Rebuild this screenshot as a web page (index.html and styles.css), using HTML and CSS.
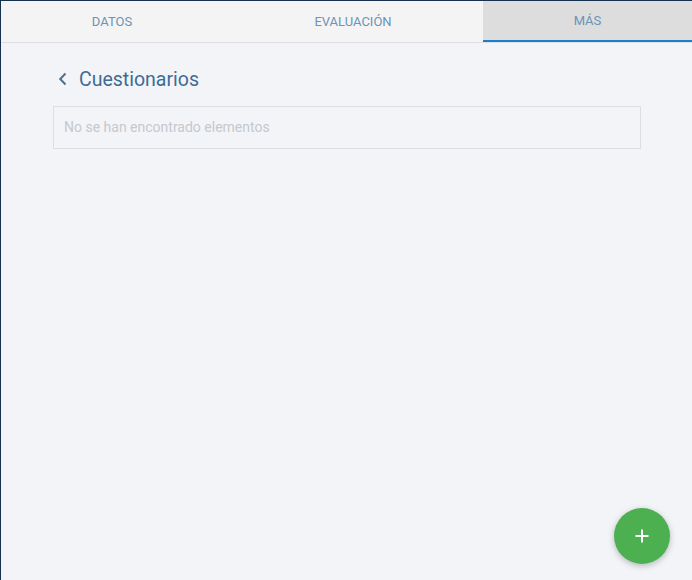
FILE: index.html
```html
<!DOCTYPE html>
<html lang="es">

<head>
    <meta charset="UTF-8">
    <meta name="viewport" content="width=device-width, initial-scale=1.0">
    <title>Cuestionarios</title>
    <link rel="stylesheet" href="styles.css">
</head>

<body>

    <nav class="tabs">
        <a class="tab tab-datos">DATOS</a>
        <a class="tab tab-evaluacion">EVALUACIÓN</a>
        <a class="tab tab-mas">MÁS</a>
    </nav>

    <main class="content">
        <div class="heading">
            <svg class="back" width="10" height="14" viewBox="0 0 10 14">
                <path d="M7.5 1.5 L2.2 7 L7.5 12.5" fill="none" stroke="#54708a" stroke-width="2" />
            </svg>
            <h1>Cuestionarios</h1>
        </div>
        <div class="empty">No se han encontrado elementos</div>
    </main>

    <button class="fab" type="button">
        <svg width="16" height="16" viewBox="0 0 16 16">
            <path d="M8 1.5 V14.5 M1.5 8 H14.5" fill="none" stroke="#fff" stroke-width="2" />
        </svg>
    </button>

</body>

</html>
```

FILE: styles.css
```css
html,
body {
    height: 100%;
}

body {
    margin: 0;
    box-sizing: border-box;
    height: 580px;
    overflow: hidden;
    position: relative;
    background-color: #f2f4f8;
    border-top: 1px solid #14324f;
    border-left: 1px solid #14324f;
    font-family: Roboto, "Liberation Sans", sans-serif;
}

.tabs {
    display: flex;
    height: 42px;
    box-sizing: border-box;
    background-color: #f4f4f4;
    border-bottom: 1px solid #dcdee2;
}

.tab {
    display: flex;
    align-items: center;
    justify-content: center;
    font-size: 13px;
    color: #6d93b5;
}

.tab-datos {
    width: 222px;
}

.tab-evaluacion {
    width: 260px;
}

.tab-mas {
    flex: 1;
    height: 41px;
    box-sizing: border-box;
    background-color: #dddddd;
    border-bottom: 2px solid #1a7fd0;
}

.content {
    padding: 0 51px 0 52px;
}

.heading {
    display: flex;
    align-items: center;
    box-sizing: border-box;
    height: 63px;
    padding-top: 9px;
}

.back {
    margin-left: 5px;
    margin-right: 11px;
}

h1 {
    margin: 0;
    font-size: 19.5px;
    font-weight: 400;
    color: #3d6c96;
}

.empty {
    box-sizing: border-box;
    height: 43px;
    line-height: 41px;
    padding: 0 10px;
    border: 1px solid #dcdee2;
    font-size: 14px;
    color: #c6c8cc;
}

.fab {
    position: absolute;
    left: 613px;
    top: 507px;
    width: 56px;
    height: 56px;
    padding: 0;
    border: none;
    border-radius: 50%;
    background-color: #4caf50;
    box-shadow: 0 2px 6px rgba(0, 0, 0, 0.25);
    display: flex;
    align-items: center;
    justify-content: center;
}
```
